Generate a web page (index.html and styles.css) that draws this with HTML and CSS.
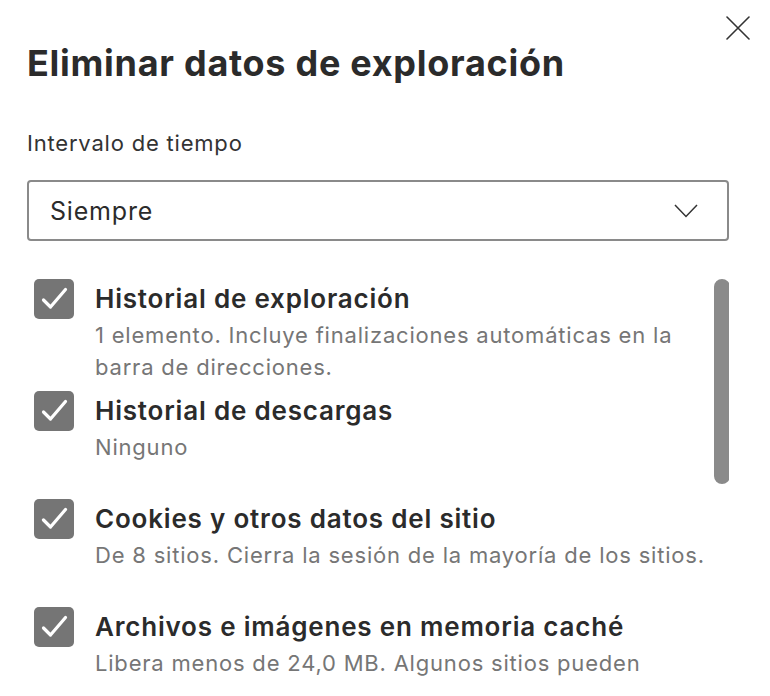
FILE: index.html
```html
<!DOCTYPE html>
<html lang="es">
<head>
  <meta charset="UTF-8" />
  <title>Eliminar datos de exploración</title>
  <link rel="stylesheet" href="styles.css">
</head>
<body>

  <!-- cuadro de diálogo -->
  <div class="dialog">
    <div class="header">
      <h1>Eliminar datos de exploración</h1>
      <button class="close" aria-label="Cerrar">
        <svg width="24" height="24" viewBox="0 0 24 24">
          <path d="M1 1 L23 23 M23 1 L1 23" stroke="#333" stroke-width="1.6" fill="none" stroke-linecap="round"/>
        </svg>
      </button>
    </div>

    <label class="field-label">Intervalo de tiempo</label>
    <div class="select">
      <span>Siempre</span>
      <svg width="24" height="14" viewBox="0 0 24 14">
        <path d="M1 1 L12 12.5 L23 1" stroke="#333" stroke-width="1.5" fill="none"/>
      </svg>
    </div>

    <!-- lista de opciones (zona con desplazamiento) -->
    <div class="list-wrap">
      <div class="list">
        <div class="item first">
          <span class="check"><svg width="40" height="40" viewBox="0 0 40 40"><path d="M9.5 21 L16.5 28 L31.5 10.5" stroke="#fff" stroke-width="3.2" fill="none" stroke-linecap="round" stroke-linejoin="round"/></svg></span>
          <div>
            <div class="item-title">Historial de exploración</div>
            <div class="item-desc">1 elemento. Incluye finalizaciones automáticas en la barra de direcciones.</div>
          </div>
        </div>
        <div class="item">
          <span class="check"><svg width="40" height="40" viewBox="0 0 40 40"><path d="M9.5 21 L16.5 28 L31.5 10.5" stroke="#fff" stroke-width="3.2" fill="none" stroke-linecap="round" stroke-linejoin="round"/></svg></span>
          <div>
            <div class="item-title">Historial de descargas</div>
            <div class="item-desc">Ninguno</div>
          </div>
        </div>
        <div class="item">
          <span class="check"><svg width="40" height="40" viewBox="0 0 40 40"><path d="M9.5 21 L16.5 28 L31.5 10.5" stroke="#fff" stroke-width="3.2" fill="none" stroke-linecap="round" stroke-linejoin="round"/></svg></span>
          <div>
            <div class="item-title">Cookies y otros datos del sitio</div>
            <div class="item-desc">De 8 sitios. Cierra la sesión de la mayoría de los sitios.</div>
          </div>
        </div>
        <div class="item">
          <span class="check"><svg width="40" height="40" viewBox="0 0 40 40"><path d="M9.5 21 L16.5 28 L31.5 10.5" stroke="#fff" stroke-width="3.2" fill="none" stroke-linecap="round" stroke-linejoin="round"/></svg></span>
          <div>
            <div class="item-title">Archivos e imágenes en memoria caché</div>
            <div class="item-desc">Libera menos de 24,0 MB. Algunos sitios pueden cargarse más lentamente.</div>
          </div>
        </div>
      </div>
      <div class="scrollbar"><div class="thumb"></div></div>
    </div>
  </div>

</body>
</html>
```

FILE: styles.css
```css
body {
  margin: 0;
  background: #fff;
  font-family: 'Inter', 'Noto Sans', sans-serif;
  color: #2b2b2b;
  letter-spacing: 0.05em;
}
.dialog {
  padding: 0 41px 0 27px;
  height: 696px;
  overflow: hidden;
}
.header {
  display: flex;
  justify-content: space-between;
  align-items: flex-start;
}
h1 {
  margin: 41px 0 0;
  font-size: 36px;
  line-height: 44px;
  font-weight: 700;
  letter-spacing: 0.02em;
  color: #2b2b2b;
}
.close {
  margin: 16px -21px 0 0;
  padding: 0;
  border: none;
  background: none;
  width: 24px;
  height: 24px;
  cursor: pointer;
}
.close svg { display: block; }
.field-label {
  display: block;
  margin-top: 46px;
  font-size: 22px;
  line-height: 24px;
  color: #333;
}
.select {
  margin-top: 25px;
  height: 57px;
  border: 2px solid #8a8a8a;
  border-radius: 4px;
  display: flex;
  align-items: center;
  justify-content: space-between;
  padding: 0 29px 0 21px;
  font-size: 25px;
  color: #2b2b2b;
}
.list-wrap {
  margin-top: 38px;
  height: 403px;
  overflow: hidden;
  display: flex;
  gap: 7px;
}
.list {
  flex: 1;
}
.item {
  display: flex;
  gap: 21px;
  padding-left: 7px;
  margin-bottom: 36px;
}
.item.first { margin-bottom: 8px; }
.check {
  flex: none;
  width: 40px;
  height: 40px;
  border-radius: 5px;
  background: #757575;
}
.check svg { display: block; }
.item-title {
  font-size: 26px;
  line-height: 40px;
  font-weight: 600;
  color: #2b2b2b;
}
.item-desc {
  font-size: 22px;
  line-height: 32px;
  color: #767676;
}
.scrollbar {
  flex: none;
  width: 16px;
  margin-right: -1px;
}
.thumb {
  height: 205px;
  border-radius: 8px;
  background: #8a8a8a;
}
```
